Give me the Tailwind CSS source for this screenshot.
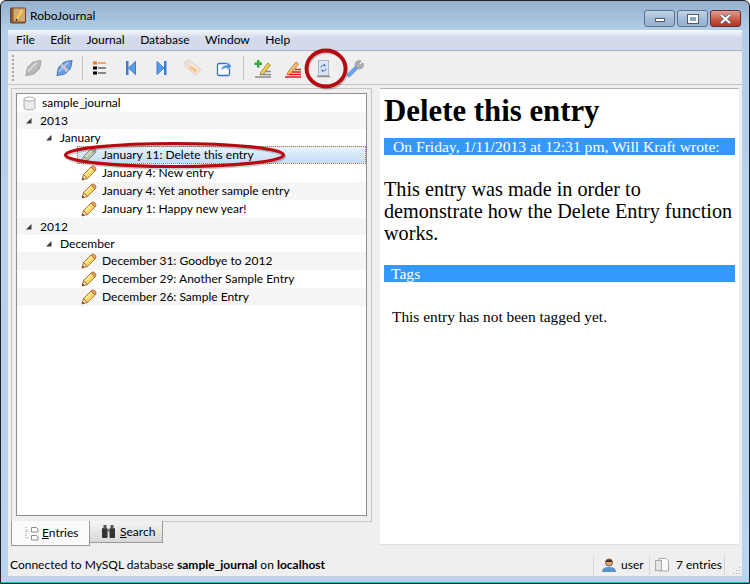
<!DOCTYPE html>
<html lang="en">
<head>
    <meta charset="UTF-8">
    <title>RoboJournal</title>
    <script src="https://cdn.jsdelivr.net/npm/@tailwindcss/browser@4"></script>
</head>
<body class="w-[750px] h-[584px] overflow-hidden bg-white font-['Lato',sans-serif] text-[12px] text-black">
<svg width="0" height="0" class="absolute">
    <symbol id="pencil" viewBox="0 0 16 16">
        <path d="M2.500 9.500l7.500-7.500 4 4-7.500 7.500z" fill="#f8d66c" stroke="#b5782c"/>
        <path d="M4.500 10l7-7" stroke="#fdf0b8" stroke-width="1.300"/>
        <path d="M10 2l1.200-1 2.300.4 1.200 1.300.2 2.100L14 6z" fill="#e8a060" stroke="#a8641e" stroke-width=".8"/>
        <path d="M2.500 9.500l-1.500 5.500 5.500-1.500z" fill="#f4dcb8" stroke="#a8641e" stroke-width=".9"/>
        <path d="M1 15l.7-2.400 1.700 1.700z" fill="#5a3a1a"/>
    </symbol>
    <symbol id="pencil-grey" viewBox="0 0 16 16">
        <path d="M2.500 9.500l7.500-7.500 4 4-7.500 7.500z" fill="#b6c4ae" stroke="#84907c"/>
        <path d="M4.500 10l7-7" stroke="#dbe4d6" stroke-width="1.300"/>
        <path d="M10 2l1.200-1 2.300.4 1.200 1.300.2 2.100L14 6z" fill="#a8a8a0" stroke="#7c8a70" stroke-width=".8"/>
        <path d="M2.500 9.500l-1.500 5.500 5.500-1.500z" fill="#d8dcd0" stroke="#7c8a70" stroke-width=".9"/>
    </symbol>
    <symbol id="arrow" viewBox="0 0 7 7">
        <path d="M6.500 1v5.500H1z" fill="#3c3c3c"/>
    </symbol>
</svg>
<div class="relative w-[750px] h-[584px] flex flex-col border border-[#222] rounded-t-[6px] bg-gradient-to-b from-[#94b0cd] from-0% via-[#b4cfe8] via-[30px] to-[#b9d5ee]">

    <!-- title bar -->
    <div class="h-[29px] shrink-0 flex items-center pl-[9px] pr-[8px]">
        <svg width="16" height="17" viewBox="0 0 16 17" class="mr-[4px]">
            <rect x=".5" y="1" width="15" height="15" rx="1" fill="#8c5a30" stroke="#6a4424"/>
            <rect x="3.500" y="1.500" width="11.500" height="13" fill="#d4a870"/>
            <path d="M7 12l5-9" stroke="#f4d44c" stroke-width="2"/>
            <path d="M7 12l-1 2" stroke="#333" stroke-width="1.500"/>
        </svg>
        <span class="text-black">RoboJournal</span>
        <div class="ml-auto flex gap-[2px] mt-[6px]">
            <div class="w-[31px] h-[17px] rounded-[3px] border border-[#5f7089] bg-gradient-to-b from-[#c4d4e6] via-[#a5bdd8] to-[#93b1d2] flex items-center justify-center">
                <div class="w-[10px] h-[4px] mt-[3px] bg-white border border-[#505a6c]"></div>
            </div>
            <div class="w-[31px] h-[17px] rounded-[3px] border border-[#5f7089] bg-gradient-to-b from-[#c4d4e6] via-[#a5bdd8] to-[#93b1d2] flex items-center justify-center">
                <div class="w-[10px] h-[8px] border-[2px] border-white outline outline-[#505a6c] bg-[#8aa5c4]"></div>
            </div>
            <div class="w-[31px] h-[17px] rounded-[3px] border border-[#6a2a34] bg-gradient-to-b from-[#dca094] from-0% via-[#c9533e] via-60% to-[#a83a2a] flex items-center justify-center">
                <svg width="13" height="10" viewBox="0 0 13 10"><path d="M2 1l9 8M11 1l-9 8" stroke="#505a6c" stroke-width="3.500"/><path d="M2 1l9 8M11 1l-9 8" stroke="#fff" stroke-width="2.200"/></svg>
            </div>
        </div>
    </div>

    <!-- client area -->
    <div class="ml-[7px] mr-[7px] flex-1 flex flex-col bg-[#efefef] min-h-0">
        <!-- menu -->
        <div class="h-[21px] shrink-0 flex items-center gap-[15.500px] pl-[8px] text-black border-b border-[#a9b0c4] bg-gradient-to-b from-[#f6f8fc] from-0% to-[#d3daec] to-40%">
            <span>File</span><span>Edit</span><span>Journal</span><span>Database</span><span>Window</span><span>Help</span>
        </div>
        <!-- toolbar -->
        <div class="h-[33px] mt-[1px] shrink-0 flex items-center border-b border-[#c4c4c4] pl-[4px]">
            <div class="w-[4px] h-[26px] border-l-2 border-dotted border-[#a8a8a8] mr-[2px]"></div>
            <svg width="31" height="22" viewBox="0 0 31 22"><g transform="rotate(-45 15.500 11)"><path d="M5 11l4-3 3-1.500h7l3 1.500 4 3-4 3-3 1.500h-7l-3-1.500z" fill="#b9b9b9" stroke="#a2a2a2"/><path d="M9 9.500h13" stroke="#e0e0e0" stroke-width="1.500"/></g></svg>
            <svg width="31" height="22" viewBox="0 0 31 22"><g transform="rotate(-45 15.500 11)"><path d="M5 11l4-3 3-1.500h7l3 1.500 4 3-4 3-3 1.500h-7l-3-1.500z" fill="#6d9fe3" stroke="#4a78bc"/><path d="M9 9.500h13" stroke="#b8d2f4" stroke-width="1.500"/><rect x="14" y="6.500" width="3" height="9" fill="#c8c8c8"/></g></svg>
            <div class="w-px h-[24px] bg-[#c4c4c4] ml-[2px] mr-[1px]"></div>
            <svg width="31" height="22" viewBox="0 0 31 22"><rect x="9" y="4.500" width="4" height="3" fill="#f27a1a"/><rect x="9" y="9.500" width="4" height="3"/><rect x="9" y="14.500" width="4" height="3"/><path d="M14 6h8" stroke="#f27a1a" stroke-width="1.200"/><path d="M14 11h8M14 16h8" stroke="#222" stroke-width="1.200"/></svg>
            <svg width="31" height="22" viewBox="0 0 31 22"><rect x="11" y="4" width="2.500" height="14" fill="#3a7ccf"/><path d="M20.500 4.500v13l-7-6.500z" fill="#5a9de6" stroke="#3a7ccf"/></svg>
            <svg width="31" height="22" viewBox="0 0 31 22"><rect x="18" y="4" width="2.500" height="14" fill="#3a7ccf"/><path d="M11 4.500v13l7-6.500z" fill="#5a9de6" stroke="#3a7ccf"/></svg>
            <svg width="31" height="22" viewBox="0 0 31 22"><path d="M8 5l4-2 12 9.500-5.500 6L8 9z" fill="#f8e8d8" stroke="#d8d0c8"/><path d="M13 8l8 5-2.500 3-7-5z" fill="#f6c896"/><circle cx="11" cy="6.500" r="1.200" fill="#fff" stroke="#bbb" stroke-width=".6"/></svg>
            <svg width="31" height="22" viewBox="0 0 31 22"><rect x="9.500" y="6.500" width="12" height="12" rx="1.500" fill="#fff" stroke="#2f6fcf" stroke-width="1.300"/><path d="M13 14c0-4 2.500-6 6-6V4.500l5 4.500-5 4.500V11c-2.500 0-4 .8-6 3z" fill="#4a8fe0" stroke="#fff" stroke-width=".7"/></svg>
            <div class="w-px h-[24px] bg-[#c4c4c4] ml-[4px] mr-[2px]"></div>
            <svg width="31" height="22" viewBox="0 0 31 22"><path d="M15 15l7-9 2.500 2-7 9-3.500 1z" fill="#f4d04c" stroke="#8a6a1a" stroke-width=".7"/><path d="M8.500 5.500h2.500V3h2.500v2.500H16V8h-2.500v2.500H11V8H8.500z" fill="#2fa83c"/><path d="M19 14.500h6M16 17.500h9M9 20h16" stroke="#8a8a8a" stroke-width="1.500"/></svg>
            <svg width="31" height="22" viewBox="0 0 31 22"><path d="M11 15l8-10 2.500 2-8 10-3.500 1z" fill="#f4c070" stroke="#a8601a" stroke-width=".7"/><path d="M18 12.500h6M15 15h9M12 17.500h12M8 20h16" stroke="#ee1818" stroke-width="1.300"/></svg>
            <svg width="31" height="22" viewBox="0 0 31 22"><rect x="10.500" y="3.500" width="10" height="15" fill="#dde5f3" stroke="#a8b6cc"/><path d="M9 19.500h13" stroke="#909090" stroke-width="1.500"/><path d="M13 10.500c0-2 2-3 4-2M18 11.500c0 2-2 3-4 2" fill="none" stroke="#2f6fd0"/><path d="M16 7l2 1.500-2 1.200zM15 15l-2-1.500 2-1.200z" fill="#2f6fd0"/></svg>
            <svg width="31" height="22" viewBox="0 0 31 22"><path d="M10 18l8-8" stroke="#6ea2e4" stroke-width="4.500" stroke-linecap="round"/><path d="M17 10a4 4 0 0 1 5-6l-2 2.500 1.500 1.500L24 6a4 4 0 0 1-6 5z" fill="#b0b0b0" stroke="#8a8a8a" stroke-width=".7"/></svg>
        </div>

        <!-- main -->
        <div class="flex-1 flex min-h-0 pt-[3px]">
            <div class="w-[372px] shrink-0 flex flex-col pl-[3px]">
                <div class="flex-1 border border-[#c6c6c6] p-[4px] pb-[5px] min-h-0 mr-[8px]">
                    <div class="h-full border border-[#8a8f98] bg-white text-black">
                        <div class="h-[18px] flex items-center pl-[5px]">
                            <svg width="15" height="15" viewBox="0 0 15 15" class="mr-[5px]"><path d="M2 3v9c0 2.500 11 2.500 11 0V3z" fill="#ececec" stroke="#aaa"/><ellipse cx="7.500" cy="3" rx="5.500" ry="2" fill="#fff" stroke="#aaa"/></svg>
                            <span>sample_journal</span>
                        </div>
                        <div class="h-[17px] flex items-center pl-[8px] bg-[#f5f5f5]"><svg width="7" height="7" class="mr-[8px]"><use href="#arrow"/></svg><span>2013</span></div>
                        <div class="h-[17px] flex items-center pl-[28px]"><svg width="7" height="7" class="mr-[8px]"><use href="#arrow"/></svg><span>January</span></div>
                        <div class="h-[18px] ml-[60px] flex items-center pl-[3px] border border-dotted border-[#c47a2a] bg-gradient-to-b from-[#e8f2fd] to-[#c4dcf6]"><svg width="16" height="16" class="mr-[5px]"><use href="#pencil-grey"/></svg><span>January 11: Delete this entry</span></div>
                        <div class="h-[18px] flex items-center pl-[64px]"><svg width="16" height="16" class="mr-[5px]"><use href="#pencil"/></svg><span>January 4: New entry</span></div>
                        <div class="h-[18px] flex items-center pl-[64px] bg-[#f5f5f5]"><svg width="16" height="16" class="mr-[5px]"><use href="#pencil"/></svg><span>January 4: Yet another sample entry</span></div>
                        <div class="h-[18px] flex items-center pl-[64px]"><svg width="16" height="16" class="mr-[5px]"><use href="#pencil"/></svg><span>January 1: Happy new year!</span></div>
                        <div class="h-[17px] flex items-center pl-[8px] bg-[#f5f5f5]"><svg width="7" height="7" class="mr-[8px]"><use href="#arrow"/></svg><span>2012</span></div>
                        <div class="h-[17px] flex items-center pl-[28px]"><svg width="7" height="7" class="mr-[8px]"><use href="#arrow"/></svg><span>December</span></div>
                        <div class="h-[18px] flex items-center pl-[64px] bg-[#f5f5f5]"><svg width="16" height="16" class="mr-[5px]"><use href="#pencil"/></svg><span>December 31: Goodbye to 2012</span></div>
                        <div class="h-[18px] flex items-center pl-[64px]"><svg width="16" height="16" class="mr-[5px]"><use href="#pencil"/></svg><span>December 29: Another Sample Entry</span></div>
                        <div class="h-[18px] flex items-center pl-[64px] bg-[#f5f5f5]"><svg width="16" height="16" class="mr-[5px]"><use href="#pencil"/></svg><span>December 26: Sample Entry</span></div>
                    </div>
                </div>
                <!-- tabs -->
                <div class="h-[23px] shrink-0 flex">
                    <div class="w-[79px] h-[25px] -mt-px relative bg-[#fbfbfb] border border-t-0 border-[#9a9a9a] flex items-center pl-[13px]">
                        <svg width="14" height="15" viewBox="0 0 14 15" class="mr-[3px]"><path d="M1 1v11h3M1 5h3" stroke="#999" stroke-dasharray="1 1" fill="none"/><path d="M6.500 1.500h5l1.500 1.500v3h-6.500zM6.500 9.500h5l1.500 1.500v3h-6.500z" fill="#fff" stroke="#8a8a8a"/></svg>
                        <span><u>E</u>ntries</span>
                    </div>
                    <div class="w-[73px] h-[22px] -mt-px bg-gradient-to-b from-[#f4f4f4] to-[#d8d8d8] border border-t-0 border-l-0 border-[#9a9a9a] flex items-center pl-[11px]">
                        <svg width="15" height="15" viewBox="0 0 15 15" class="mr-[4px]"><rect x="1" y="4" width="5.500" height="10" rx="1" fill="#333"/><rect x="8.500" y="4" width="5.500" height="10" rx="1" fill="#333"/><rect x="2.500" y="1" width="3" height="4" fill="#555"/><rect x="9.500" y="1" width="3" height="4" fill="#555"/><rect x="6" y="5" width="3" height="3" fill="#777"/></svg>
                        <span><u>S</u>earch</span>
                    </div>
                </div>
            </div>
            <!-- article -->
            <div class="flex-1 mr-[3px] bg-white border-t border-[#b4b4b4] border-b border-b-[#e2e2e2] px-[4px] font-['Liberation_Serif',serif]">
                <h1 class="font-bold text-[30.800px] leading-[32px] mt-[6px] text-black">Delete this entry</h1>
                <div class="mt-[11px] h-[17px] leading-[17px] bg-[#3399ff] text-white text-[15.600px] pl-[9px]">On Friday, 1/11/2013 at 12:31 pm, Will Kraft wrote:</div>
                <p class="mt-[23px] text-[20.200px] leading-[22px] text-black">This entry was made in order to demonstrate how the Delete Entry function works.</p>
                <div class="mt-[21px] h-[17px] leading-[17px] bg-[#3399ff] text-white text-[15.600px] pl-[7px]">Tags</div>
                <p class="mt-[26px] pl-[8px] text-[15.400px] leading-[18px] text-black">This entry has not been tagged yet.</p>
            </div>
        </div>

        <!-- status bar -->
        <div class="h-[31px] shrink-0 flex items-center pt-[9px] pl-[2px] text-black">
            <span>Connected to MySQL database <b>sample_journal</b> on <b>localhost</b></span>
            <div class="ml-auto flex items-center">
                <div class="w-[56px] h-[19px] border-l border-[#d4d4d4] pl-[7px] flex items-center gap-[4px]">
                    <svg width="16" height="16" viewBox="0 0 16 16"><path d="M1 15c0-4 3-5 7-5s7 1 7 5z" fill="#5b93d0"/><circle cx="8" cy="5.500" r="3.500" fill="#d8a880" stroke="#7a5a40"/><path d="M4.500 5c0-3.500 7-3.500 7 0z" fill="#4a3020"/></svg>
                    <span>user</span>
                </div>
                <div class="w-[75px] h-[19px] border-l border-[#d4d4d4] pl-[4px] flex items-center gap-[6px]">
                    <svg width="16" height="16" viewBox="0 0 16 16"><path d="M5 1.500h7l2.500 2.500v10H5z" fill="#fafafa" stroke="#aaa"/><rect x="1.500" y="3.500" width="6" height="10" fill="#e4e4e4" stroke="#aaa"/></svg>
                    <span>7 entries</span>
                </div>
                <div class="h-[19px] w-[18px] border-l border-[#d4d4d4] relative">
                    <svg width="10" height="10" viewBox="0 0 10 10" class="absolute right-[1px] bottom-0"><path d="M8 2h1v1H8zM5 5h1v1H5zM8 5h1v1H8zM2 8h1v1H2zM5 8h1v1H5zM8 8h1v1H8z" fill="#aaa"/></svg>
                </div>
            </div>
        </div>
    </div>
    <div class="h-[7px] shrink-0"></div>
    <div class="absolute left-0 right-0 bottom-0 h-px bg-[#2bb4c4]"></div>

    <!-- red callouts drawn over the screenshot -->
    <svg class="absolute -left-px -top-px pointer-events-none" width="750" height="584" viewBox="0 0 750 584">
        <g fill="none" stroke="#000" stroke-opacity=".2" stroke-width="3.500" transform="translate(1 1.500)">
            <ellipse cx="174.500" cy="155" rx="109" ry="11.500"/>
            <ellipse cx="326" cy="68.500" rx="19.500" ry="18"/>
        </g>
        <ellipse cx="174.500" cy="155" rx="109" ry="11.500" fill="none" stroke="#b7090f" stroke-width="3.200"/>
        <ellipse cx="326" cy="68.500" rx="19.500" ry="18" fill="none" stroke="#b7090f" stroke-width="3.800"/>
    </svg>
</div>
</body>
</html>
